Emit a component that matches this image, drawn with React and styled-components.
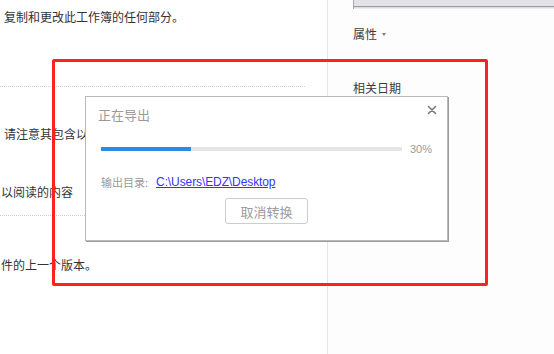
import React from "react";
import styled, { createGlobalStyle } from "styled-components";

const Global = createGlobalStyle`
  html, body { margin: 0; padding: 0; background: #ffffff; }
  body { font-family: "Liberation Sans", "Noto Sans CJK SC", sans-serif; overflow: hidden; }
  * { box-sizing: border-box; }
`;

const Page = styled.div`
  position: relative;
  display: flex;
  width: 554px;
  height: 354px;
  overflow: hidden;
`;

const LeftPane = styled.div`
  width: 327px;
  flex: none;
  display: flex;
  flex-direction: column;
  padding: 8px 22px 0 4px;
  background: #ffffff;
  overflow: hidden;
`;

const Divider = styled.div`
  width: 1px;
  flex: none;
  background: #e4e4e4;
`;

const RightPane = styled.div`
  flex: 1;
  min-width: 0;
  display: flex;
  flex-direction: column;
  padding-left: 25px;
  background: #fdfdfd;
`;

const Para = styled.p`
  margin: ${(p) => p.$mt || 0}px 0 0 ${(p) => p.$indent || 0}px;
  font-family: "Noto Sans CJK SC", sans-serif;
  font-size: 12px;
  line-height: 18px;
  color: #333333;
  white-space: nowrap;
`;

const Dotted = styled.div`
  margin: ${(p) => p.$mt}px 0 0 -4px;
  border-top: 1px dotted #cfcfcf;
`;

const ThumbStrip = styled.div`
  flex: none;
  height: 9px;
  margin-right: -2px;
  background: linear-gradient(to bottom, #e2e2e8 0, #e2e2e8 6px, #9a9aa0 6px, #9a9aa0 7px, #d6d6da 7px, #f2f2f2 9px);
  border-left: 1px solid #a8a8ae;
`;

const SideHeading = styled.div`
  display: flex;
  align-items: center;
  gap: 5px;
  margin-top: ${(p) => p.$mt}px;
  font-family: "Noto Sans CJK SC", sans-serif;
  font-size: 12px;
  line-height: 18px;
  color: #3a3a3a;
`;

const Caret = styled.span`
  width: 0;
  height: 0;
  border-left: 2.5px solid transparent;
  border-right: 2.5px solid transparent;
  border-top: 3px solid #7a7a7a;
  margin-top: 1px;
`;

const Annotation = styled.div`
  position: absolute;
  left: 52px;
  top: 59px;
  width: 436px;
  height: 227px;
  border: 3px solid #ff2020;
  border-radius: 2px;
  pointer-events: none;
`;

const Dialog = styled.div`
  position: absolute;
  left: 85px;
  top: 96px;
  width: 363px;
  height: 145px;
  background: #ffffff;
  border: 1px solid #b9b9b9;
  box-shadow: 1px 1px 0 #9c9c9c;
  display: flex;
  flex-direction: column;
`;

const Header = styled.div`
  display: flex;
  justify-content: space-between;
  align-items: flex-start;
  padding: 9px 10px 0 12px;
`;

const Title = styled.div`
  font-family: "Noto Sans CJK SC", sans-serif;
  font-size: 13px;
  line-height: 18px;
  color: #9a9a9a;
`;

const Close = styled.button`
  margin-top: -1px;
  width: 10px;
  height: 10px;
  padding: 0;
  border: none;
  background: none;
  display: flex;
  cursor: pointer;
`;

const ProgressRow = styled.div`
  display: flex;
  align-items: center;
  gap: 8px;
  margin-top: 17px;
  padding-left: 15px;
  height: 16px;
`;

const Track = styled.div`
  width: 301px;
  height: 4px;
  background: #e5e5e5;
`;

const Fill = styled.div`
  height: 100%;
  background: #2a8ce8;
`;

const Percent = styled.span`
  font-family: "Liberation Sans", sans-serif;
  font-size: 11px;
  color: #9a9a9a;
`;

const InfoRow = styled.div`
  display: flex;
  align-items: center;
  gap: 8px;
  margin-top: 17px;
  padding-left: 15px;
  height: 16px;
`;

const Label = styled.span`
  font-family: "Noto Sans CJK SC", sans-serif;
  font-size: 11px;
  color: #9a9a9a;
`;

const PathLink = styled.a`
  font-family: "Liberation Sans", sans-serif;
  font-size: 12px;
  color: #3434f5;
  text-decoration: underline;
  letter-spacing: -0.1px;
`;

const Footer = styled.div`
  display: flex;
  justify-content: center;
  margin-top: 8px;
`;

const CancelButton = styled.button`
  width: 83px;
  height: 26px;
  border: 1px solid #cdcdcd;
  border-radius: 3px;
  background: #ffffff;
  font-family: "Noto Sans CJK SC", sans-serif;
  font-size: 13px;
  color: #9c9c9c;
  padding: 0;
  cursor: pointer;
`;

export default function App() {
  const progress = 30;
  return (
    <>
      <Global />
      <Page>
        <LeftPane>
          <Para>复制和更改此工作簿的任何部分。</Para>
          <Dotted $mt={60} />
          <Para $mt={38}>请注意其包含以下无法阅读的内容</Para>
          <Para $mt={40} $indent={-3}>以阅读的内容</Para>
          <Dotted $mt={14} />
          <Para $mt={40} $indent={-3}>件的上一个版本。</Para>
        </LeftPane>
        <Divider />
        <RightPane>
          <ThumbStrip />
          <SideHeading $mt={16}>
            属性
            <Caret />
          </SideHeading>
          <SideHeading $mt={36}>相关日期</SideHeading>
        </RightPane>

        <Annotation />

        <Dialog>
          <Header>
            <Title>正在导出</Title>
            <Close aria-label="关闭">
              <svg width="10" height="10" viewBox="0 0 10 10">
                <path d="M1.5 1.5 L8.5 8.5 M8.5 1.5 L1.5 8.5" stroke="#7a7a7a" strokeWidth="1.6" strokeLinecap="round" />
              </svg>
            </Close>
          </Header>
          <ProgressRow>
            <Track>
              <Fill style={{ width: `${progress}%` }} />
            </Track>
            <Percent>{progress}%</Percent>
          </ProgressRow>
          <InfoRow>
            <Label>输出目录:</Label>
            <PathLink href="#">C:\Users\EDZ\Desktop</PathLink>
          </InfoRow>
          <Footer>
            <CancelButton>取消转换</CancelButton>
          </Footer>
        </Dialog>
      </Page>
    </>
  );
}
